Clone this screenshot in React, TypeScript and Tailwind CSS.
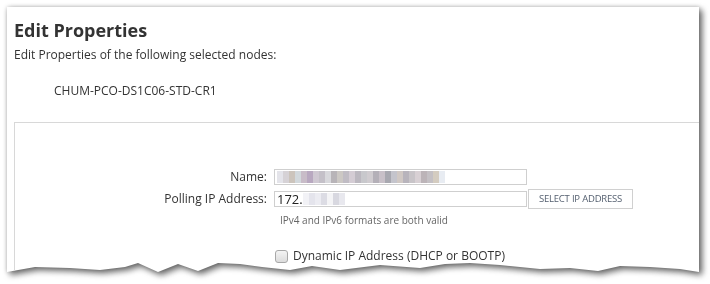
const nameBlur = [
  "#e4e4ea", "#d6d2d6", "#ccc4bc", "#d2d8dc", "#c8bcc8", "#b8a8c0", "#cfc8d2", "#c4c0c8",
  "#d8d8dc", "#b8b4b8", "#ccc8c4", "#c0bcc4", "#d4ccd4", "#bcb8c0", "#c8c8cc", "#d0ccd0",
  "#b4b0b8", "#c8c0c8", "#a8a8b0", "#c4c4cc", "#d0c8c4", "#b8b4bc", "#c8c4c8", "#d8d0d4",
  "#bcb4b8", "#c4c0c4", "#d4ccc0", "#e8ecf2",
];

const ipBlur = ["#f2f2f6", "#e4e4ec", "#ececf2", "#dcdce4", "#f4f4f6", "#d8d8e0", "#e8e8ee"];

export default function App() {
  return (
    <div className="w-[710px] h-[284px] bg-white overflow-hidden pl-[7px] pt-[7px] font-['Open_Sans',sans-serif] text-[#333]">
      <div className="w-[692px] [filter:drop-shadow(3px_3px_3px_rgba(0,0,0,0.55))_drop-shadow(0_0_2px_rgba(0,0,0,0.22))]">
        <div className="h-[268px] bg-white overflow-hidden px-[7px] pt-[11px] [clip-path:polygon(0_0,100%_0,692px_265px,673px_262px,643px_260px,613px_259px,591px_264px,563px_261px,533px_262px,493px_258px,463px_256px,438px_257px,413px_261px,373px_258px,333px_263px,305px_259px,283px_263px,255px_260px,233px_257px,211px_256px,191px_264px,171px_257px,151px_265px,131px_256px,118px_260px,93px_263px,63px_261px,28px_260px,0_265px)]">
          <h1 className="text-[18px] leading-[24px] font-bold text-[#333]">Edit Properties</h1>
          <p className="mt-[5px] text-[12px] leading-[16px]">Edit Properties of the following selected nodes:</p>
          <p className="mt-[20px] pl-[40px] text-[12px] leading-[16px]">CHUM-PCO-DS1C06-STD-CR1</p>

          <div className="mt-[23px] w-[740px] h-[200px] border border-[#d8d8d8] pt-[46px] text-[12px]">
            <div className="flex items-center h-[16px]">
              <label className="w-[252px] text-right leading-[16px]">Name:</label>
              <div className="ml-[7px] w-[253px] h-[16px] border border-[#cfcfcf] flex items-center pl-[2px]">
                <div className="flex h-[12px]">
                  {nameBlur.map((c, i) => (
                    <span key={i} className="w-[6px] h-full" style={{ backgroundColor: c }} />
                  ))}
                </div>
              </div>
            </div>

            <div className="flex items-center h-[16px] mt-[6px]">
              <label className="w-[252px] text-right leading-[16px]">Polling IP Address:</label>
              <div className="ml-[7px] w-[253px] h-[16px] border border-[#cfcfcf] flex items-center pl-[2px] text-[13px] text-[#222]">
                <span className="leading-[14px]">172.</span>
                <div className="flex h-[12px]">
                  {ipBlur.map((c, i) => (
                    <span key={i} className="w-[6px] h-full" style={{ backgroundColor: c }} />
                  ))}
                </div>
              </div>
              <button className="ml-[1px] -mt-[1px] w-[105px] h-[20px] border border-[#d0d0d0] bg-white text-[9.5px] tracking-[-0.2px] text-[#556070] leading-none">
                SELECT IP ADDRESS
              </button>
            </div>

            <p className="ml-[265px] mt-[7px] text-[10px] leading-[13px] text-[#666]">
              IPv4 and IPv6 formats are both valid
            </p>

            <div className="flex items-center ml-[260px] mt-[21px]">
              <span className="w-[13px] h-[13px] rounded-[3px] border border-[#a8a8a8] bg-gradient-to-b from-[#f4f4f4] to-[#dcdcdc]" />
              <span className="ml-[5px] text-[12px] leading-[16px]">Dynamic IP Address (DHCP or BOOTP)</span>
            </div>
          </div>
        </div>
      </div>
    </div>
  );
}
